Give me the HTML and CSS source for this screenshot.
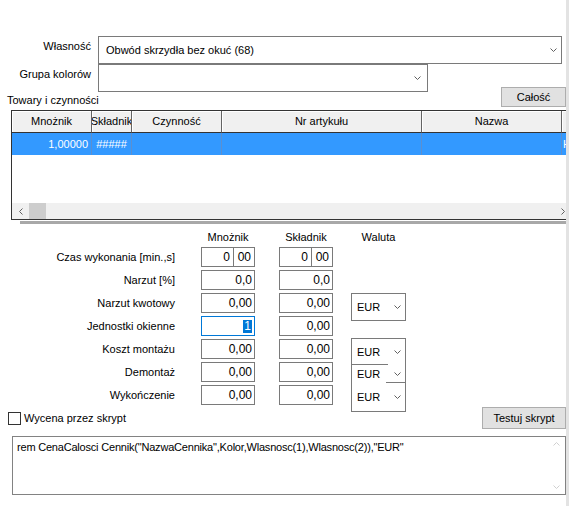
FILE: index.html
```html
<!DOCTYPE html>
<html lang="pl">
<head>
<meta charset="utf-8">
<title>Własność</title>
<link rel="stylesheet" href="styles.css">
</head>
<body>
<div class="window">
  <div class="prop-grid">
    <div class="prop-label">Własność</div>
    <div class="select select-wide">
      <span>Obwód skrzydła bez okuć (68)</span>
      <svg class="chev" viewBox="0 0 7 4"><polyline points="0.5,0.5 3.5,3.5 6.5,0.5"/></svg>
    </div>
    <div class="prop-label">Grupa kolorów</div>
    <div class="select select-mid">
      <span></span>
      <svg class="chev" viewBox="0 0 7 4"><polyline points="0.5,0.5 3.5,3.5 6.5,0.5"/></svg>
    </div>
  </div>

  <div class="goods-bar">
    <span class="section-title">Towary i czynności</span>
    <button class="btn btn-all">Całość</button>
  </div>

  <div class="grid-table">
    <div class="tr">
      <div class="th c1">Mnożnik</div>
      <div class="th c2">Składnik</div>
      <div class="th c3">Czynność</div>
      <div class="th c4">Nr artykułu</div>
      <div class="th c5">Nazwa</div>
      <div class="th c6"></div>
    </div>
    <div class="tr tr-selected">
      <div class="td c1 num">1,00000</div>
      <div class="td c2 center">#####</div>
      <div class="td c3"></div>
      <div class="td c4"></div>
      <div class="td c5"></div>
      <div class="td c6 lead">H</div>
    </div>
    <div class="table-body"></div>
    <div class="hscroll">
      <div class="sb-arrow"><svg class="arr" viewBox="0 0 4 7"><polyline points="3.5,0.5 0.5,3.5 3.5,6.5"/></svg></div>
      <div class="sb-thumb"></div>
      <div class="sb-track"></div>
      <div class="sb-arrow"><svg class="arr" viewBox="0 0 4 7"><polyline points="0.5,0.5 3.5,3.5 0.5,6.5"/></svg></div>
    </div>
  </div>
  <div class="splitter"></div>

  <div class="form-grid">
    <div class="col-head g-m">Mnożnik</div>
    <div class="col-head g-s">Składnik</div>
    <div class="col-head g-w">Waluta</div>

    <div class="f-lbl r2">Czas wykonania [min.,s]</div>
    <div class="box box-split g-m r2"><span class="part part-a">0</span><span class="part part-b">00</span></div>
    <div class="box box-split g-s r2"><span class="part part-a">0</span><span class="part part-b">00</span></div>

    <div class="f-lbl r3">Narzut [%]</div>
    <div class="box g-m r3">0,0</div>
    <div class="box g-s r3">0,0</div>

    <div class="f-lbl r4">Narzut kwotowy</div>
    <div class="box g-m r4">0,00</div>
    <div class="box g-s r4">0,00</div>

    <div class="f-lbl r5">Jednostki okienne</div>
    <div class="box box-focus g-m r5"><span class="sel">1</span></div>
    <div class="box g-s r5">0,00</div>

    <div class="f-lbl r6">Koszt montażu</div>
    <div class="box g-m r6">0,00</div>
    <div class="box g-s r6">0,00</div>

    <div class="f-lbl r7">Demontaż</div>
    <div class="box g-m r7">0,00</div>
    <div class="box g-s r7">0,00</div>

    <div class="f-lbl r8">Wykończenie</div>
    <div class="box g-m r8">0,00</div>
    <div class="box g-s r8">0,00</div>

    <div class="wsel g-w r4">
      <span>EUR</span>
      <svg class="chev" viewBox="0 0 7 4"><polyline points="0.5,0.5 3.5,3.5 6.5,0.5"/></svg>
    </div>
    <div class="wgroup g-w">
      <div class="wcell wcell-1"><span>EUR</span><svg class="chev" viewBox="0 0 7 4"><polyline points="0.5,0.5 3.5,3.5 6.5,0.5"/></svg></div>
      <div class="wcell wcell-2"><span>EUR</span><svg class="chev" viewBox="0 0 7 4"><polyline points="0.5,0.5 3.5,3.5 6.5,0.5"/></svg></div>
      <div class="wcell wcell-3"><span>EUR</span><svg class="chev" viewBox="0 0 7 4"><polyline points="0.5,0.5 3.5,3.5 6.5,0.5"/></svg></div>
    </div>
  </div>

  <div class="script-bar">
    <label class="check"><span class="chk"></span>Wycena przez skrypt</label>
    <button class="btn btn-test">Testuj skrypt</button>
  </div>

  <div class="script">
    <div class="script-text">rem CenaCalosci Cennik("NazwaCennika",Kolor,Wlasnosc(1),Wlasnosc(2)),"EUR"</div>
    <div class="vscroll">
      <svg class="varr" viewBox="0 0 7 4"><polyline points="0.5,3.5 3.5,0.5 6.5,3.5"/></svg>
      <svg class="varr" viewBox="0 0 7 4"><polyline points="0.5,0.5 3.5,3.5 6.5,0.5"/></svg>
    </div>
  </div>
</div>
</body>
</html>
```

FILE: styles.css
```css
* { box-sizing: border-box; margin: 0; padding: 0; }
html, body { background: #fff; }
body {
  width: 569px;
  height: 506px;
  overflow: hidden;
  font-family: "Liberation Sans", Arial, sans-serif;
  font-size: 11px;
  line-height: 13px;
  color: #000;
}
.window {
  width: 569px;
  height: 506px;
  padding-top: 36px;
  border-right: 3px solid #e3e3e3;
  overflow: hidden;
}

/* top property selects */
.prop-grid {
  display: grid;
  grid-template-columns: 91px auto;
  column-gap: 7px;
  justify-content: start;
}
.prop-label { text-align: right; padding-top: 4px; white-space: nowrap; }
.select {
  height: 28px;
  border: 1px solid #7a7a7a;
  background: #fff;
  display: flex;
  align-items: center;
  justify-content: space-between;
  padding: 0 4px 0 7px;
  white-space: nowrap;
}
.select-wide { width: 464px; }
.select-mid { width: 330px; padding-right: 6px; }
.chev { width: 7px; height: 4px; flex: none; }
.chev polyline, .arr polyline, .varr polyline {
  fill: none;
  stroke: #606060;
  stroke-width: 1;
}

.goods-bar {
  display: flex;
  justify-content: space-between;
  align-items: flex-end;
  height: 20px;
  margin-top: -5px;
  padding-left: 7px;
}
.btn {
  font: inherit;
  color: #000;
  background: #e1e1e1;
  border: 1px solid #adadad;
  height: 20px;
}
.btn-all { width: 65px; }

/* grid table */
.grid-table {
  margin: 3px 0 0 11px;
  width: 560px;
  height: 110px;
  border: 1px solid #333;
  border-right: none;
  display: flex;
  flex-direction: column;
}
.tr { display: flex; height: 22px; flex: none; }
.th {
  background: #f0f0f0;
  border-right: 1px solid #646464;
  border-bottom: 1px solid #333;
  box-shadow: inset 1px 1px #fff;
  display: flex;
  align-items: center;
  justify-content: center;
  overflow: hidden;
  white-space: nowrap;
}
.c1 { width: 80px; flex: none; }
.c2 { width: 40px; flex: none; }
.c3 { width: 90px; flex: none; }
.c4 { width: 200px; flex: none; }
.c5 { width: 140px; flex: none; }
.c6 { flex: 1; }
.tr-selected { background: #3399ff; color: #fff; }
.td {
  border-right: 1px solid #5b8fcf;
  display: flex;
  align-items: center;
  overflow: hidden;
  white-space: nowrap;
}
.td.c6 { border-right: none; }
.num { justify-content: flex-end; padding-right: 3px; }
.center { justify-content: center; }
.lead { padding-left: 1px; }
.table-body { flex: 1; }
.hscroll {
  height: 16px;
  flex: none;
  background: #f0f0f0;
  display: flex;
}
.sb-arrow {
  width: 17px;
  display: flex;
  align-items: center;
  justify-content: center;
}
.arr { width: 4px; height: 7px; }
.sb-thumb { width: 17px; background: #cdcdcd; }
.sb-track { flex: 1; }
.splitter {
  margin: 1px 0 0 20px;
  height: 3px;
  background: #a8a8a8;
}

/* price form */
.form-grid {
  display: grid;
  grid-template-columns: 175px 26px 54px 24px 54px 18px 55px;
  grid-template-rows: 18px repeat(7, 23px);
  margin-top: 5px;
}
.col-head { grid-row: 1; text-align: center; padding-top: 2px; white-space: nowrap; }
.g-m { grid-column: 3; }
.g-s { grid-column: 5; }
.g-w { grid-column: 7; }
.r2 { grid-row: 2; }
.r3 { grid-row: 3; }
.r4 { grid-row: 4; }
.r5 { grid-row: 5; }
.r6 { grid-row: 6; }
.r7 { grid-row: 7; }
.r8 { grid-row: 8; }
.f-lbl {
  grid-column: 1;
  height: 20px;
  display: flex;
  align-items: center;
  justify-content: flex-end;
  white-space: nowrap;
}
.box {
  height: 20px;
  border: 1px solid #7a7a7a;
  background: #fff;
  display: flex;
  align-items: center;
  justify-content: flex-end;
  padding-right: 2px;
  font-size: 12px;
}
.box-split { padding-right: 0; }
.part {
  height: 100%;
  display: flex;
  align-items: center;
  justify-content: flex-end;
  padding-right: 3px;
}
.part-a { width: 32px; border-right: 1px solid #7a7a7a; }
.part-b { flex: 1; }
.box-focus { border-color: #0078d7; }
.sel { background: #0078d7; color: #fff; line-height: 13px; padding: 0 1px; }

.wsel {
  align-self: start;
  height: 28px;
  border: 1px solid #7a7a7a;
  display: flex;
  align-items: center;
  justify-content: space-between;
  padding: 0 4px 0 5px;
}
.wgroup {
  grid-row: 6 / span 3;
  align-self: start;
  margin-top: -1px;
  height: 74px;
  border: 1px solid #7a7a7a;
  display: flex;
  flex-direction: column;
}
.wcell {
  display: flex;
  align-items: center;
  justify-content: space-between;
  padding: 0 4px 0 5px;
  flex: none;
}
.wcell-1 {
  height: 26px;
  background: linear-gradient(#7a7a7a, #7a7a7a) left bottom / 36px 1px no-repeat;
}
.wcell-2 {
  height: 18px;
  background: linear-gradient(#7a7a7a, #7a7a7a) right bottom / 19px 1px no-repeat;
}
.wcell-3 { flex: 1; }

/* script */
.script-bar {
  display: flex;
  justify-content: space-between;
  align-items: center;
  height: 22px;
  margin-top: -1px;
  padding-left: 8px;
}
.check { display: flex; align-items: center; }
.chk {
  width: 13px;
  height: 13px;
  border: 1px solid #333;
  background: #fff;
  margin-right: 3px;
}
.btn-test { width: 84px; height: 22px; }
.script {
  margin: 7px 0 0 12px;
  width: 554px;
  height: 59px;
  border: 1px solid #828282;
  display: flex;
  justify-content: space-between;
}
.script-text { padding: 4px 0 0 4px; white-space: nowrap; letter-spacing: -0.2px; }
.vscroll {
  width: 17px;
  display: flex;
  flex-direction: column;
  justify-content: space-between;
  align-items: center;
  padding: 5px 0;
}
.varr { width: 7px; height: 4px; }
.varr polyline { stroke: #d0d0d0; }
```
